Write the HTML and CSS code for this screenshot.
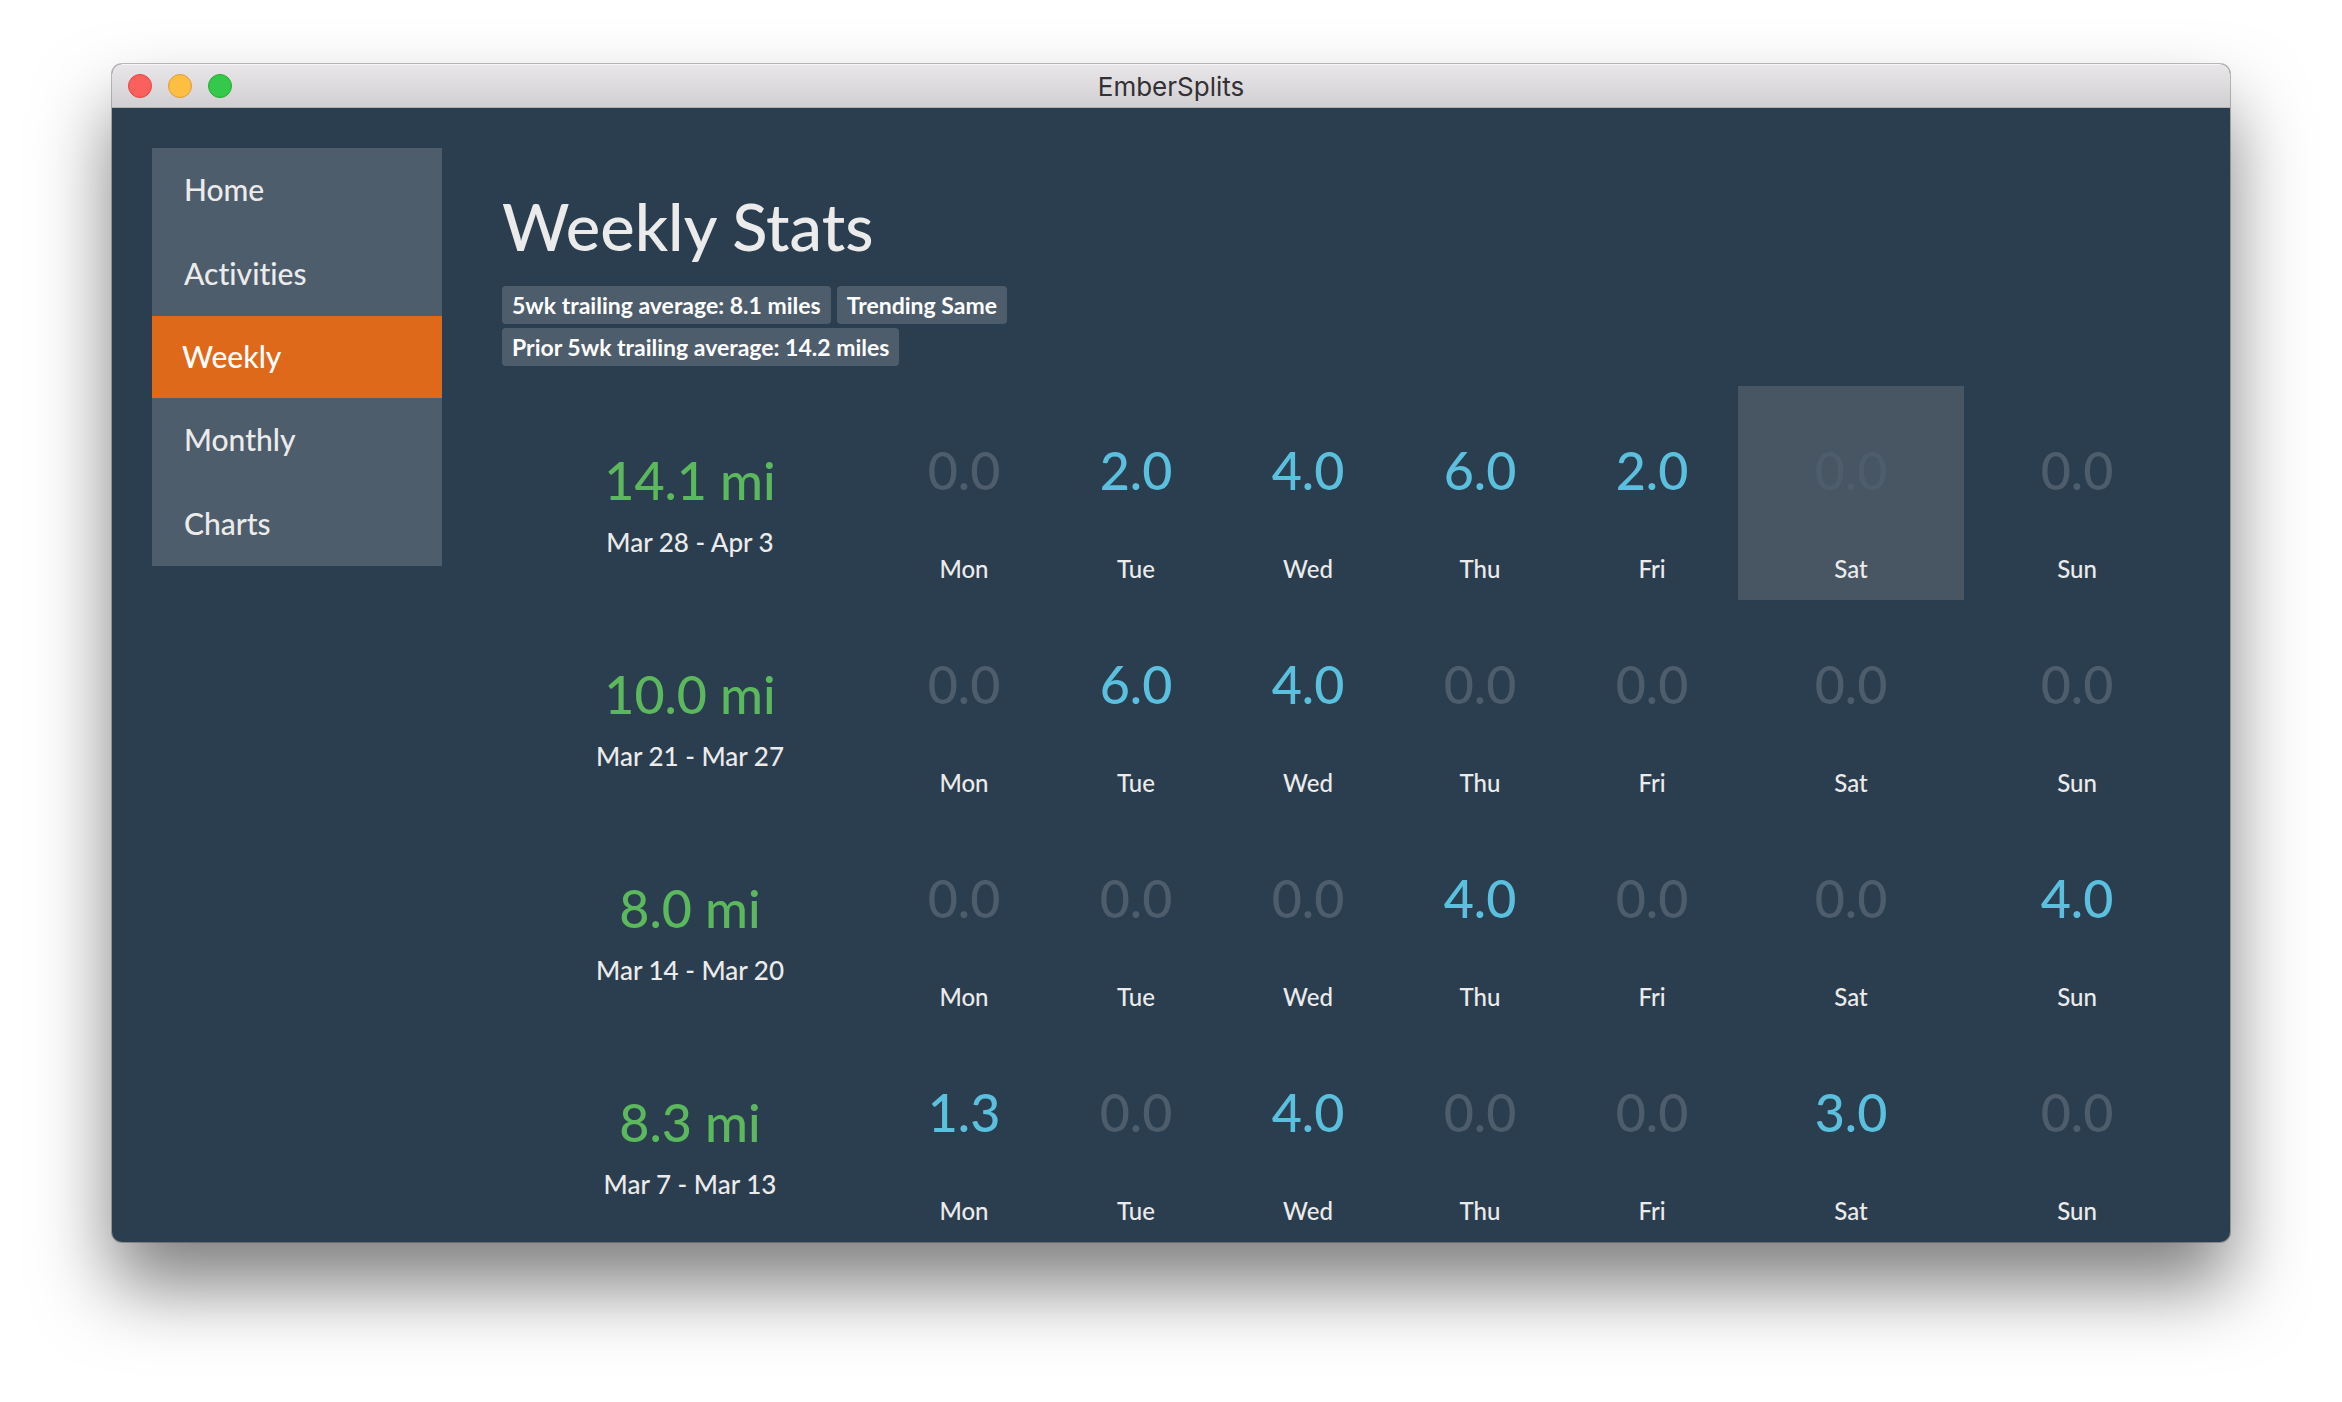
FILE: index.html
```html
<!DOCTYPE html>
<html lang="en">
<head>
<meta charset="utf-8">
<title>EmberSplits</title>
<link rel="stylesheet" href="styles.css">
</head>
<body>
<div class="window">
  <header class="titlebar">
    <div class="controls">
      <button class="control control-close" type="button" aria-label="Close"></button>
      <button class="control control-minimize" type="button" aria-label="Minimize"></button>
      <button class="control control-zoom" type="button" aria-label="Zoom"></button>
    </div>
    <div class="title">EmberSplits</div>
  </header>
  <div class="app">
    <nav class="sidebar">
      <a class="nav-link" href="#home">Home</a>
      <a class="nav-link" href="#activities">Activities</a>
      <a class="nav-link active" href="#weekly">Weekly</a>
      <a class="nav-link" href="#monthly">Monthly</a>
      <a class="nav-link" href="#charts">Charts</a>
    </nav>
    <main class="content">
      <h1 class="heading">Weekly Stats</h1>
      <div class="labels">
        <div class="label-row">
          <span class="label">5wk trailing average: 8.1 miles</span>
          <span class="label">Trending Same</span>
        </div>
        <div class="label-row">
          <span class="label">Prior 5wk trailing average: 14.2 miles</span>
        </div>
      </div>
      <table class="weeks">
        <colgroup>
          <col class="col-total">
          <col class="col-weekday" span="5">
          <col class="col-weekend" span="2">
        </colgroup>
        <tbody>
          <tr>
            <th scope="row"><div class="total">14.1 mi</div><div class="range">Mar 28 - Apr 3</div></th>
            <td><div class="miles zero">0.0</div><div class="day">Mon</div></td>
            <td><div class="miles">2.0</div><div class="day">Tue</div></td>
            <td><div class="miles">4.0</div><div class="day">Wed</div></td>
            <td><div class="miles">6.0</div><div class="day">Thu</div></td>
            <td><div class="miles">2.0</div><div class="day">Fri</div></td>
            <td class="today"><div class="miles zero">0.0</div><div class="day">Sat</div></td>
            <td><div class="miles zero">0.0</div><div class="day">Sun</div></td>
          </tr>
          <tr>
            <th scope="row"><div class="total">10.0 mi</div><div class="range">Mar 21 - Mar 27</div></th>
            <td><div class="miles zero">0.0</div><div class="day">Mon</div></td>
            <td><div class="miles">6.0</div><div class="day">Tue</div></td>
            <td><div class="miles">4.0</div><div class="day">Wed</div></td>
            <td><div class="miles zero">0.0</div><div class="day">Thu</div></td>
            <td><div class="miles zero">0.0</div><div class="day">Fri</div></td>
            <td><div class="miles zero">0.0</div><div class="day">Sat</div></td>
            <td><div class="miles zero">0.0</div><div class="day">Sun</div></td>
          </tr>
          <tr>
            <th scope="row"><div class="total">8.0 mi</div><div class="range">Mar 14 - Mar 20</div></th>
            <td><div class="miles zero">0.0</div><div class="day">Mon</div></td>
            <td><div class="miles zero">0.0</div><div class="day">Tue</div></td>
            <td><div class="miles zero">0.0</div><div class="day">Wed</div></td>
            <td><div class="miles">4.0</div><div class="day">Thu</div></td>
            <td><div class="miles zero">0.0</div><div class="day">Fri</div></td>
            <td><div class="miles zero">0.0</div><div class="day">Sat</div></td>
            <td><div class="miles">4.0</div><div class="day">Sun</div></td>
          </tr>
          <tr>
            <th scope="row"><div class="total">8.3 mi</div><div class="range">Mar 7 - Mar 13</div></th>
            <td><div class="miles">1.3</div><div class="day">Mon</div></td>
            <td><div class="miles zero">0.0</div><div class="day">Tue</div></td>
            <td><div class="miles">4.0</div><div class="day">Wed</div></td>
            <td><div class="miles zero">0.0</div><div class="day">Thu</div></td>
            <td><div class="miles zero">0.0</div><div class="day">Fri</div></td>
            <td><div class="miles">3.0</div><div class="day">Sat</div></td>
            <td><div class="miles zero">0.0</div><div class="day">Sun</div></td>
          </tr>
        </tbody>
      </table>
    </main>
  </div>
</div>
</body>
</html>
```
FILE: styles.css
```css
* {
  box-sizing: border-box;
}

body {
  margin: 0;
  padding: 64px 112px 160px;
  background: #fff;
  color: #ebebeb;
  font-family: Lato, "Liberation Sans", sans-serif;
  font-weight: 500;
  font-variant-ligatures: none;
}

.window {
  overflow: hidden;
  border-radius: 10px;
  background: #2b3e50;
  box-shadow: 0 0 0 1px rgba(0, 0, 0, 0.25), 0 44px 76px rgba(0, 0, 0, 0.5);
}

.titlebar {
  display: grid;
  grid-template-columns: 1fr auto 1fr;
  align-items: center;
  height: 44px;
  padding: 0 16px;
  border-top: 1px solid #f6f5f6;
  border-bottom: 1px solid #b4b2b4;
  background: linear-gradient(#e8e6e8, #d1cfd1);
}

.controls {
  display: flex;
  gap: 16px;
}

.control {
  width: 24px;
  height: 24px;
  padding: 0;
  border: 1px solid;
  border-radius: 50%;
}

.control-close {
  border-color: #e2443f;
  background: #fc605c;
}

.control-minimize {
  border-color: #dd9b35;
  background: #fdbe41;
}

.control-zoom {
  border-color: #24a935;
  background: #34c94a;
}

.title {
  padding-top: 2px;
  color: #333135;
  font-family: Inter, "Liberation Sans", sans-serif;
  font-size: 26px;
  font-weight: 400;
  line-height: 32px;
}

.app {
  display: flex;
  align-items: flex-start;
  gap: 60px;
  padding: 0 40px;
}

.sidebar {
  flex: 0 0 290px;
  margin-top: 40px;
  background: #4e5d6c;
}

.nav-link {
  display: block;
  padding: 19px 32px 21px;
  color: #ebebeb;
  font-size: 30px;
  line-height: 44px;
  text-decoration: none;
}

.nav-link.active {
  padding: 18px 30px 20px;
  background: #df691a;
  color: #fff;
}

.content {
  flex: 1;
  min-width: 0;
}

.heading {
  margin: 80px 0 0;
  font-size: 65px;
  font-weight: 500;
  line-height: 76px;
}

.labels {
  display: grid;
  gap: 4px;
  margin: 22px 0 20px;
}

.label-row {
  display: flex;
  gap: 6px;
}

.label {
  padding: 1px 10px 0;
  border-radius: 4px;
  background: #4e5d6c;
  color: #fff;
  font-size: 23px;
  font-weight: 700;
  line-height: 37px;
}

.weeks {
  width: 100%;
  border-collapse: collapse;
  table-layout: fixed;
  text-align: center;
}

.col-total {
  width: 376px;
}

.col-weekday {
  width: 172px;
}

.col-weekend {
  width: 226px;
}

.weeks th,
.weeks td {
  height: 214px;
  padding: 0;
  font-weight: 500;
  vertical-align: top;
}

.weeks .today {
  background: #485563;
}

.total {
  padding-top: 62px;
  color: #5cb85c;
  font-size: 52px;
  line-height: 64px;
}

.range {
  margin-top: 13px;
  font-size: 26px;
  line-height: 34px;
}

.miles {
  padding-top: 52px;
  color: #5bc0de;
  font-size: 52px;
  line-height: 64px;
}

.miles.zero {
  color: #4e5d6c;
}

.day {
  margin-top: 51px;
  font-size: 24px;
  line-height: 32px;
}
```
